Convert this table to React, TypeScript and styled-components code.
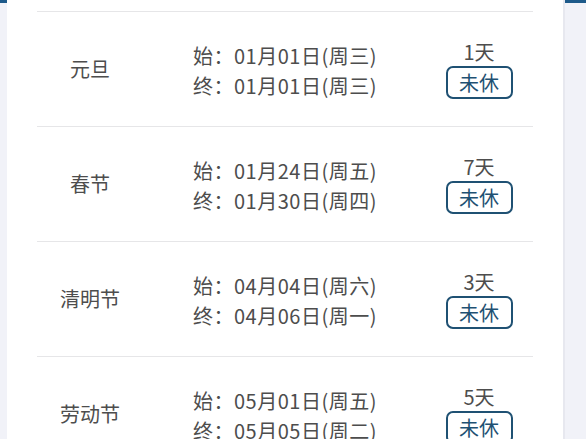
import React from "react";
import styled, { createGlobalStyle } from "styled-components";

const Global = createGlobalStyle`
  html, body { margin: 0; padding: 0; }
  body {
    font-family: "Noto Sans CJK SC", "Noto Sans", sans-serif;
    background: #f1f2f8;
    overflow: hidden;
  }
`;

const Page = styled.div`
  display: flex;
  height: 439px;
  padding: 0 21px 0 7px;
  background: linear-gradient(to bottom, #1d5a8a 0, #1d5a8a 3px, #f1f2f8 3px);
  overflow: hidden;
`;

const Card = styled.div`
  flex: 1;
  background: #ffffff;
  border-right: 2px solid #e7e8ef;
  padding: 11px 30px 0 30px;
`;

const Row = styled.div`
  display: grid;
  grid-template-columns: 156px 1fr 108px;
  align-items: center;
  height: 114px;
  border-top: 1px solid #e6e6e8;
  color: #4d4d4d;
  font-size: 20px;
`;

const Name = styled.div`
  width: 106px;
  text-align: center;
  line-height: 30px;
`;

const Dates = styled.div`
  display: flex;
  flex-direction: column;
  line-height: 30px;
  letter-spacing: 0.5px;
  padding-top: 3px;
`;

const Right = styled.div`
  display: flex;
  flex-direction: column;
  align-items: center;
  gap: 2px;
`;

const Days = styled.div`
  line-height: 25px;
`;

const Badge = styled.div`
  box-sizing: border-box;
  width: 67px;
  height: 33px;
  border: 2px solid #1f5173;
  border-radius: 7px;
  color: #1f5173;
  display: flex;
  align-items: center;
  justify-content: center;
  line-height: 1;
`;

const data = [
  { name: "元旦", start: "01月01日(周三)", end: "01月01日(周三)", days: "1天" },
  { name: "春节", start: "01月24日(周五)", end: "01月30日(周四)", days: "7天" },
  { name: "清明节", start: "04月04日(周六)", end: "04月06日(周一)", days: "3天" },
  { name: "劳动节", start: "05月01日(周五)", end: "05月05日(周二)", days: "5天" },
];

export default function App() {
  return (
    <>
      <Global />
      <Page>
        <Card>
          {data.map((d) => (
            <Row key={d.name}>
              <Name>{d.name}</Name>
              <Dates>
                <span>始：{d.start}</span>
                <span>终：{d.end}</span>
              </Dates>
              <Right>
                <Days>{d.days}</Days>
                <Badge>未休</Badge>
              </Right>
            </Row>
          ))}
        </Card>
      </Page>
    </>
  );
}
